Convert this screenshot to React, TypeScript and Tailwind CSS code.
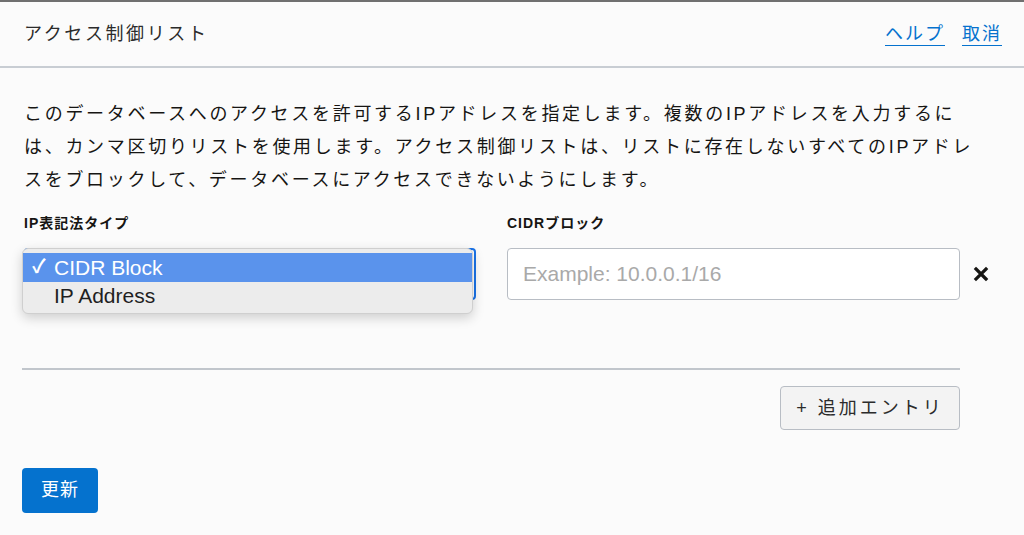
import React from 'react';

const font = { fontFamily: '"Liberation Sans", "Noto Sans CJK JP", sans-serif' };

const CloseIcon = () => (
    <svg width="16" height="16" viewBox="0 0 16 16" className="text-[#161513]">
        <path d="M3 3 L13 13 M13 3 L3 13" stroke="currentColor" strokeWidth="3.2" strokeLinecap="square" />
    </svg>
);

export default function App() {
    return (
        <div className="w-[1024px] h-[535px] overflow-hidden bg-[#fbfbfb] border-t-2 border-[#707070] text-[#161513]" style={font}>
            {/* Header */}
            <div className="h-[66px] flex items-center justify-between pl-6 pr-[22px] border-b-2 border-[#c8cdd3]">
                <h1 className="text-[18px] tracking-[2.6px] text-[#2b2b2b]">アクセス制御リスト</h1>
                <div className="flex items-center gap-[17px] text-[18px] tracking-[2px] text-[#0572ce]">
                    <a href="#" className="underline underline-offset-[5px]">ヘルプ</a>
                    <a href="#" className="underline underline-offset-[5px]">取消</a>
                </div>
            </div>

            {/* Body */}
            <div className="pl-[22px] pr-[64px] pt-[30px]">
                <p className="pl-[2px] mr-[-40px] text-[18px] leading-[33px] tracking-[2.7px] whitespace-nowrap">
                    このデータベースへのアクセスを許可するIPアドレスを指定します。複数のIPアドレスを入力するに<br />
                    は、カンマ区切りリストを使用します。アクセス制御リストは、リストに存在しないすべてのIPアドレ<br />
                    スをブロックして、データベースにアクセスできないようにします。
                </p>

                <div className="mt-[16px] grid grid-cols-[452px_453px] gap-x-[31px] pl-[2px]">
                    <label className="text-[14px] font-semibold tracking-[1px] leading-[20px]">IP表記法タイプ</label>
                    <label className="text-[14px] font-semibold tracking-[1px] leading-[20px]">CIDRブロック</label>

                    {/* Select with open menu */}
                    <div className="relative mt-[15px] h-[52px]">
                        <div className="h-full rounded-[4px] border-2 border-[#1a73e8] bg-white" />
                        <div className="absolute left-[-2px] top-0 w-[451px] h-[66px] rounded-[6px] border border-[#cfcfcf] bg-[#ececec] shadow-[0_4px_12px_rgba(0,0,0,0.18)] pt-[4px] text-[21px]">
                            <div className="h-[29px] flex items-center bg-[#5a93ec] text-white">
                                <span className="w-[31px] pl-[9px] text-[19px] font-bold">✓</span>
                                <span>CIDR Block</span>
                            </div>
                            <div className="h-[28px] flex items-center pl-[31px] text-[#1f1f1f]">IP Address</div>
                        </div>
                    </div>

                    <div className="relative mt-[15px] flex items-center">
                        <input
                            className="w-[453px] h-[52px] rounded-[4px] border border-[#b8bdc4] bg-white px-[15px] text-[21px] outline-none placeholder:text-[#a9a9a9]"
                            placeholder="Example: 10.0.0.1/16"
                            style={font}
                        />
                        <div className="absolute left-[466px] top-[18px]">
                            <CloseIcon />
                        </div>
                    </div>
                </div>

                <div className="mt-[68px] border-t-2 border-[#c1c6cc]" />

                <div className="mt-[16px] flex justify-end">
                    <button className="h-[44px] w-[180px] rounded-[4px] border border-[#b8bdc4] bg-[#f3f3f3] text-[18px] tracking-[3px] text-[#2b2b2b]">
                        + 追加エントリ
                    </button>
                </div>

                <button className="mt-[38px] h-[45px] w-[76px] rounded-[4px] bg-[#0572ce] text-white text-[18px] tracking-[1px]">
                    更新
                </button>
            </div>
        </div>
    );
}
